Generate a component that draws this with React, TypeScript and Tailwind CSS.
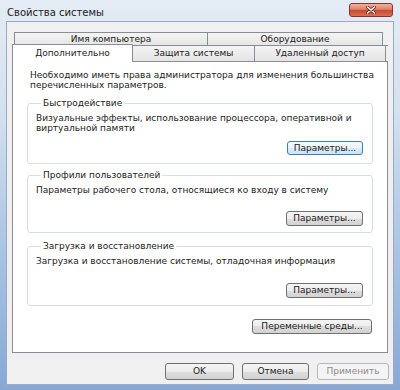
import React from "react";

type BtnProps = {
  label: string;
  w: string;
  h?: string;
  kind?: "normal" | "focus" | "disabled";
};

function Btn({ label, w, h = "h-[15px]", kind = "normal" }: BtnProps) {
  const look =
    kind === "focus"
      ? "border-[#3c7fb1] bg-[linear-gradient(#f4f9fd,#e9f3fb_50%,#d9ebf8_50%,#cde4f5)] text-[#1a1a1a]"
      : kind === "disabled"
      ? "border-[#b5b9bd] bg-[#f4f4f4] text-[#8d8d8d]"
      : "border-[#707070] bg-[linear-gradient(#f4f4f4,#ececec_50%,#dedede_50%,#d2d2d2)] text-[#1a1a1a]";
  return (
    <div
      className={`${w} ${h} ${look} border rounded-[3px] flex items-center justify-center text-[9px] leading-none`}
    >
      {label}
    </div>
  );
}

function Group({
  title,
  children,
  className = "",
}: {
  title: string;
  children: React.ReactNode;
  className?: string;
}) {
  return (
    <fieldset
      className={`border border-[#d5dfe5] rounded-[3px] pl-[8px] pr-[9px] ${className}`}
    >
      <legend className="ml-[5px] px-[2px] text-[9px] leading-[10px] text-[#222]">
        {title}
      </legend>
      {children}
    </fieldset>
  );
}

export default function App() {
  return (
    <div className="w-[400px] h-[390px] flex flex-col bg-[linear-gradient(180deg,#e4ecf5_0%,#d3e0ef_30%,#aec7e5_60%,#86a8d5_100%)] font-['DejaVu_Sans',sans-serif] text-[#222] overflow-hidden">
      {/* Title bar */}
      <div className="h-[21px] flex items-start justify-between pl-[7px] pr-[7px]">
        <span className="text-[10px] leading-[10px] mt-[8px] text-[#1c1c1c]">
          Свойства системы
        </span>
        <div className="mt-[3px] w-[44px] h-[14px] rounded-[3px] border border-[#8a3426] bg-[linear-gradient(#eeb2a4,#de8068_45%,#c8492f_55%,#d87258)] flex items-center justify-center">
          <svg width="10" height="8" viewBox="0 0 10 8">
            <path
              d="M1.5 1 L8.5 7 M8.5 1 L1.5 7"
              stroke="#6a2216"
              strokeWidth="3"
              strokeLinecap="round"
            />
            <path
              d="M1.5 1 L8.5 7 M8.5 1 L1.5 7"
              stroke="#ffffff"
              strokeWidth="1.6"
              strokeLinecap="round"
            />
          </svg>
        </div>
      </div>

      {/* Client area */}
      <div className="flex-1 mx-[6px] mb-[5px] bg-[#f0f0f0] border border-[#9aabc3] flex flex-col px-[5px] pt-[10px] pb-[4px]">
        {/* Back tab row */}
        <div className="flex h-[14px] ml-[2px] text-[9px]">
          <div className="w-[194px] border border-b-0 border-[#898c95] bg-[linear-gradient(#f4f4f4,#e4e4e4)] flex items-center justify-center leading-none">
            Имя компьютера
          </div>
          <div className="w-[175px] border border-b-0 border-l-0 border-[#898c95] bg-[linear-gradient(#f4f4f4,#e4e4e4)] flex items-center justify-center leading-none">
            Оборудование
          </div>
        </div>
        {/* Front tab row */}
        <div className="flex h-[16px] items-end text-[9px] border-t border-[#898c95] -mt-px">
          <div className="relative z-10 w-[121px] h-[18px] -mb-px border border-b-0 border-[#898c95] bg-white flex items-center justify-center leading-none">
            Дополнительно
          </div>
          <div className="w-[122px] h-[16px] border-r border-t border-[#898c95] bg-[linear-gradient(#f4f4f4,#e4e4e4)] flex items-center justify-center leading-none">
            Защита системы
          </div>
          <div className="w-[131px] h-[16px] border-r border-t border-[#898c95] bg-[linear-gradient(#f4f4f4,#e4e4e4)] flex items-center justify-center leading-none">
            Удаленный доступ
          </div>
        </div>

        {/* Panel */}
        <div className="flex-1 bg-white border border-[#898c95] flex flex-col px-[14px] text-[9px] leading-[10px]">
          <p className="mt-[8px] pl-[3px] whitespace-nowrap">
            Необходимо иметь права администратора для изменения большинства
            <br />
            перечисленных параметров.
          </p>

          <Group title="Быстродействие" className="mt-[8px] pb-[8px]">
            <p className="mt-[5px] whitespace-nowrap">
              Визуальные эффекты, использование процессора, оперативной и
              <br />
              виртуальной памяти
            </p>
            <div className="flex justify-end mt-[8px]">
              <Btn label="Параметры..." w="w-[76px]" h="h-[14px]" kind="focus" />
            </div>
          </Group>

          <Group title="Профили пользователей" className="mt-[6px] pb-[6px]">
            <p className="mt-[5px] whitespace-nowrap">
              Параметры рабочего стола, относящиеся ко входу в систему
            </p>
            <div className="flex justify-end mt-[16px]">
              <Btn label="Параметры..." w="w-[77px]" />
            </div>
          </Group>

          <Group title="Загрузка и восстановление" className="mt-[8px] pb-[7px]">
            <p className="mt-[5px] whitespace-nowrap">
              Загрузка и восстановление системы, отладочная информация
            </p>
            <div className="flex justify-end mt-[17px]">
              <Btn label="Параметры..." w="w-[77px]" />
            </div>
          </Group>

          <div className="flex justify-end mt-[13px] pr-[1px]">
            <Btn label="Переменные среды..." w="w-[120px]" />
          </div>
        </div>

        {/* Dialog buttons */}
        <div className="flex justify-end gap-[8px] mt-[10px] -mr-[1px]">
          <Btn label="OK" w="w-[69px]" h="h-[17px]" />
          <Btn label="Отмена" w="w-[67px]" h="h-[17px]" />
          <Btn label="Применить" w="w-[72px]" h="h-[17px]" kind="disabled" />
        </div>
      </div>
    </div>
  );
}
